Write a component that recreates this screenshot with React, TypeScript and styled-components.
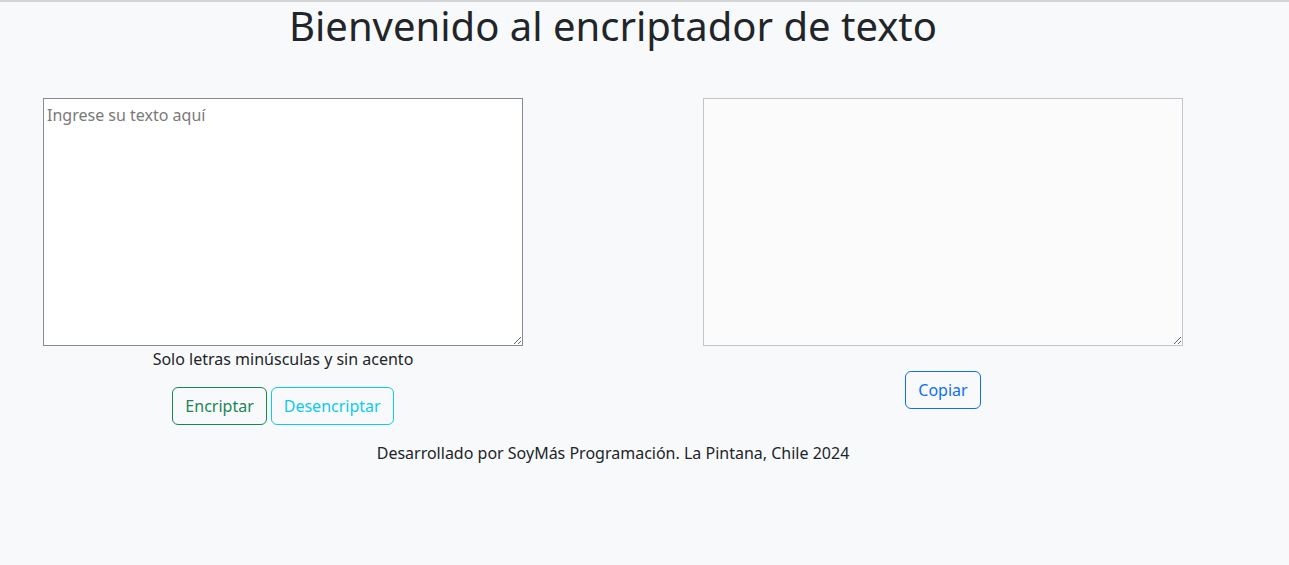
import React from "react";
import styled, { createGlobalStyle } from "styled-components";

const GlobalStyle = createGlobalStyle`
  html, body {
    margin: 0;
    padding: 0;
  }
  body {
    background: #f8f9fa;
    font-family: "Noto Sans", "Liberation Sans", sans-serif;
    font-size: 16px;
    line-height: 1.5;
    color: #212529;
    border-top: 2px solid #d3d4d5;
    min-height: 563px;
  }
`;

const Page = styled.main`
  width: 1226px;
  display: flex;
  flex-direction: column;
  align-items: center;
`;

const Title = styled.h1`
  margin: 0 0 48px;
  font-size: 40px;
  font-weight: 400;
  line-height: 1.2;
  color: #212529;
`;

const Row = styled.div`
  align-self: stretch;
  display: flex;
  gap: 180px;
  padding-left: 43px;
`;

const Column = styled.section`
  width: 480px;
  display: flex;
  flex-direction: column;
  align-items: center;
`;

const TextBox = styled.textarea<{ $readOnly?: boolean }>`
  box-sizing: border-box;
  width: 480px;
  height: 248px;
  margin: 0;
  padding: 4px 3px 2px;
  font-family: "Noto Sans", sans-serif;
  font-size: 16px;
  line-height: 1.5;
  border: 1px solid ${(p) => (p.$readOnly ? "#c4c4cc" : "#8a8a92")};
  background: ${(p) => (p.$readOnly ? "#fbfbfb" : "#ffffff")};
  color: #212529;
  border-radius: 0;
  &::placeholder {
    color: #7a7a7a;
  }
`;

const Hint = styled.p`
  margin: 1px 0 16px;
  font-size: 16px;
  line-height: 24px;
`;

const ButtonGroup = styled.div`
  display: flex;
  gap: 4px;
`;

const OutlineButton = styled.button<{ $color: string }>`
  box-sizing: border-box;
  height: 38px;
  padding: 6px 12px;
  font-family: "Noto Sans", sans-serif;
  font-size: 16px;
  line-height: 24px;
  color: ${(p) => p.$color};
  border: 1px solid ${(p) => p.$color};
  border-radius: 6px;
  background: transparent;
  cursor: pointer;
`;

const CopyWrap = styled.div`
  margin-top: 25px;
`;

const Footer = styled.footer`
  margin-top: 16px;
  font-size: 16px;
  line-height: 24px;
  text-align: center;
`;

export default function App() {
  return (
    <>
      <GlobalStyle />
      <Page>
        <Title>Bienvenido al encriptador de texto</Title>
        <Row>
          <Column>
            <TextBox placeholder="Ingrese su texto aquí" />
            <Hint>Solo letras minúsculas y sin acento</Hint>
            <ButtonGroup>
              <OutlineButton $color="#198754">Encriptar</OutlineButton>
              <OutlineButton $color="#0dcaf0">Desencriptar</OutlineButton>
            </ButtonGroup>
          </Column>
          <Column>
            <TextBox $readOnly readOnly />
            <CopyWrap>
              <OutlineButton $color="#0d6efd">Copiar</OutlineButton>
            </CopyWrap>
          </Column>
        </Row>
        <Footer>Desarrollado por SoyMás Programación. La Pintana, Chile 2024</Footer>
      </Page>
    </>
  );
}
